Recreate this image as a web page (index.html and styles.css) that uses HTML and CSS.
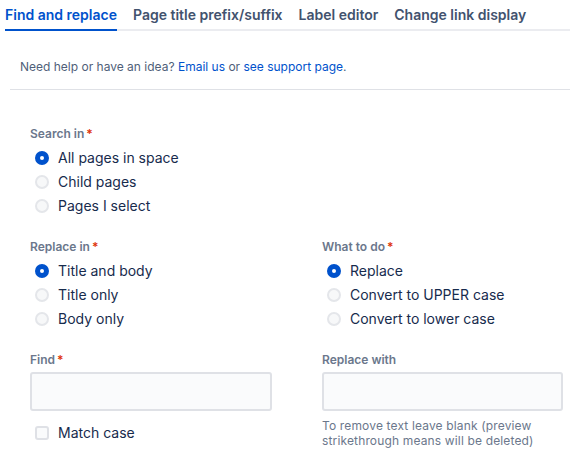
FILE: index.html
```html
<!DOCTYPE html>
<html>
<head>
<meta charset="utf-8">
<link rel="stylesheet" href="styles.css">
</head>
<body>
<div class="tabs">
  <div class="tab active">Find and replace</div>
  <div class="tab">Page title prefix/suffix</div>
  <div class="tab">Label editor</div>
  <div class="tab">Change link display</div>
</div>
<p class="help">Need help or have an idea? <a href="#">Email us</a> or <a href="#">see support page</a>.</p>
<hr class="divider">
<form class="form">
  <div class="field">
    <div class="label">Search in<span class="req">*</span></div>
    <div class="opt"><span class="radio checked"></span><span class="opt-text">All pages in space</span></div>
    <div class="opt"><span class="radio"></span><span class="opt-text">Child pages</span></div>
    <div class="opt"><span class="radio"></span><span class="opt-text">Pages I select</span></div>
  </div>
  <div class="grid">
    <div class="field">
      <div class="label">Replace in<span class="req">*</span></div>
      <div class="opt"><span class="radio checked"></span><span class="opt-text">Title and body</span></div>
      <div class="opt"><span class="radio"></span><span class="opt-text">Title only</span></div>
      <div class="opt"><span class="radio"></span><span class="opt-text">Body only</span></div>
    </div>
    <div class="field">
      <div class="label">What to do<span class="req">*</span></div>
      <div class="opt"><span class="radio checked"></span><span class="opt-text">Replace</span></div>
      <div class="opt"><span class="radio"></span><span class="opt-text">Convert to UPPER case</span></div>
      <div class="opt"><span class="radio"></span><span class="opt-text">Convert to lower case</span></div>
    </div>
    <div class="field">
      <div class="label">Find<span class="req">*</span></div>
      <div class="input"></div>
      <div class="opt check-row"><span class="checkbox"></span><span class="opt-text">Match case</span></div>
    </div>
    <div class="field">
      <div class="label">Replace with</div>
      <div class="input"></div>
      <div class="hint">To remove text leave blank (preview strikethrough means will be deleted)</div>
    </div>
  </div>
</form>
</body>
</html>
```
FILE: styles.css
```css
* { box-sizing: border-box; }
body {
  margin: 0;
  font-family: Inter, "Noto Sans", "Liberation Sans", sans-serif;
  color: #172B4D;
  background: #fff;
  overflow: hidden;
}
.tabs {
  display: flex;
  gap: 16px;
  margin-left: 5px;
  border-bottom: 2px solid #EBECF0;
}
.tab {
  font-size: 14px;
  font-weight: 600;
  line-height: 20px;
  padding: 5px 0 4px;
  color: #42526E;
  white-space: nowrap;
}
.tab.active {
  color: #0052CC;
  border-bottom: 2px solid #0052CC;
  margin-bottom: -2px;
}
.help {
  margin: 28px 0 0;
  padding-left: 20px;
  font-size: 12px;
  line-height: 16px;
  color: #505F79;
}
.help a { color: #0052CC; text-decoration: none; }
.divider {
  margin: 14px 0 0 10px;
  border: 0;
  height: 1px;
  background: #DFE1E6;
}
.form {
  padding: 36px 0 0 30px;
}
.label {
  font-size: 12px;
  font-weight: 600;
  line-height: 16px;
  color: #6B778C;
  margin-bottom: 4px;
}
.req { color: #DE350B; margin-left: 2px; }
.opt {
  display: flex;
  align-items: center;
  height: 24px;
}
.radio {
  width: 24px;
  height: 24px;
  flex: none;
  position: relative;
}
.radio::before {
  content: "";
  position: absolute;
  left: 5px;
  top: 5px;
  width: 14px;
  height: 14px;
  border-radius: 50%;
  background: #F7F8F9;
  border: 2px solid #E4E6EA;
  box-sizing: border-box;
}
.radio.checked::before {
  background: #0052CC;
  border-color: #0052CC;
}
.radio.checked::after {
  content: "";
  position: absolute;
  left: 10px;
  top: 10px;
  width: 4px;
  height: 4px;
  border-radius: 50%;
  background: #fff;
}
.opt-text {
  padding-left: 4px;
  font-size: 14px;
  line-height: 20px;
  color: #172B4D;
}
.grid {
  display: grid;
  grid-template-columns: 242px 241px;
  column-gap: 50px;
  row-gap: 21px;
  margin-top: 21px;
}
.input {
  height: 39px;
  background: #FAFBFC;
  border: 2px solid #DFE1E6;
  border-radius: 3px;
  margin-top: 4px;
}
.check-row { margin-top: 10px; }
.checkbox {
  width: 24px;
  height: 24px;
  flex: none;
  position: relative;
}
.checkbox::before {
  content: "";
  position: absolute;
  left: 5px;
  top: 5px;
  width: 14px;
  height: 14px;
  border-radius: 3px;
  background: #FAFBFC;
  border: 2px solid #DFE1E6;
  box-sizing: border-box;
}
.hint {
  margin-top: 7px;
  font-size: 12px;
  line-height: 15px;
  color: #6B778C;
  letter-spacing: 0.15px;
}
```
